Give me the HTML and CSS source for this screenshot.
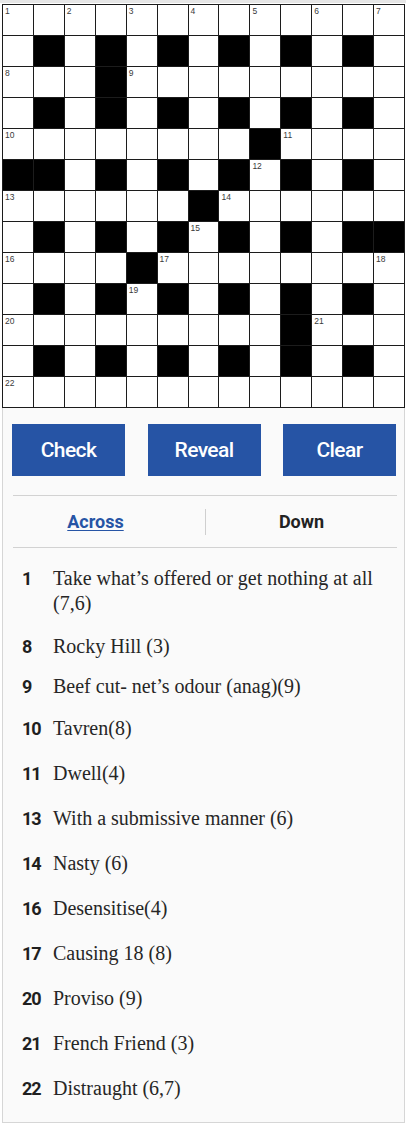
FILE: index.html
```html
<!DOCTYPE html>
<html lang="en">
<head>
<meta charset="utf-8">
<title>Crossword</title>
<link rel="stylesheet" href="styles.css">
</head>
<body>
<div class="topbar"></div>
<div class="grid">
  <!-- row 0 -->
  <div class="cell"><span class="num">1</span></div><div class="cell"></div><div class="cell"><span class="num">2</span></div><div class="cell"></div><div class="cell"><span class="num">3</span></div><div class="cell"></div><div class="cell"><span class="num">4</span></div><div class="cell"></div><div class="cell"><span class="num">5</span></div><div class="cell"></div><div class="cell"><span class="num">6</span></div><div class="cell"></div><div class="cell"><span class="num">7</span></div>
  <!-- row 1 -->
  <div class="cell"></div><div class="cell block"></div><div class="cell"></div><div class="cell block"></div><div class="cell"></div><div class="cell block"></div><div class="cell"></div><div class="cell block"></div><div class="cell"></div><div class="cell block"></div><div class="cell"></div><div class="cell block"></div><div class="cell"></div>
  <!-- row 2 -->
  <div class="cell"><span class="num">8</span></div><div class="cell"></div><div class="cell"></div><div class="cell block"></div><div class="cell"><span class="num">9</span></div><div class="cell"></div><div class="cell"></div><div class="cell"></div><div class="cell"></div><div class="cell"></div><div class="cell"></div><div class="cell"></div><div class="cell"></div>
  <!-- row 3 -->
  <div class="cell"></div><div class="cell block"></div><div class="cell"></div><div class="cell block"></div><div class="cell"></div><div class="cell block"></div><div class="cell"></div><div class="cell block"></div><div class="cell"></div><div class="cell block"></div><div class="cell"></div><div class="cell block"></div><div class="cell"></div>
  <!-- row 4 -->
  <div class="cell"><span class="num">10</span></div><div class="cell"></div><div class="cell"></div><div class="cell"></div><div class="cell"></div><div class="cell"></div><div class="cell"></div><div class="cell"></div><div class="cell block"></div><div class="cell"><span class="num">11</span></div><div class="cell"></div><div class="cell"></div><div class="cell"></div>
  <!-- row 5 -->
  <div class="cell block"></div><div class="cell block"></div><div class="cell"></div><div class="cell block"></div><div class="cell"></div><div class="cell block"></div><div class="cell"></div><div class="cell block"></div><div class="cell"><span class="num">12</span></div><div class="cell block"></div><div class="cell"></div><div class="cell block"></div><div class="cell"></div>
  <!-- row 6 -->
  <div class="cell"><span class="num">13</span></div><div class="cell"></div><div class="cell"></div><div class="cell"></div><div class="cell"></div><div class="cell"></div><div class="cell block"></div><div class="cell"><span class="num">14</span></div><div class="cell"></div><div class="cell"></div><div class="cell"></div><div class="cell"></div><div class="cell"></div>
  <!-- row 7 -->
  <div class="cell"></div><div class="cell block"></div><div class="cell"></div><div class="cell block"></div><div class="cell"></div><div class="cell block"></div><div class="cell"><span class="num">15</span></div><div class="cell block"></div><div class="cell"></div><div class="cell block"></div><div class="cell"></div><div class="cell block"></div><div class="cell block"></div>
  <!-- row 8 -->
  <div class="cell"><span class="num">16</span></div><div class="cell"></div><div class="cell"></div><div class="cell"></div><div class="cell block"></div><div class="cell"><span class="num">17</span></div><div class="cell"></div><div class="cell"></div><div class="cell"></div><div class="cell"></div><div class="cell"></div><div class="cell"></div><div class="cell"><span class="num">18</span></div>
  <!-- row 9 -->
  <div class="cell"></div><div class="cell block"></div><div class="cell"></div><div class="cell block"></div><div class="cell"><span class="num">19</span></div><div class="cell block"></div><div class="cell"></div><div class="cell block"></div><div class="cell"></div><div class="cell block"></div><div class="cell"></div><div class="cell block"></div><div class="cell"></div>
  <!-- row 10 -->
  <div class="cell"><span class="num">20</span></div><div class="cell"></div><div class="cell"></div><div class="cell"></div><div class="cell"></div><div class="cell"></div><div class="cell"></div><div class="cell"></div><div class="cell"></div><div class="cell block"></div><div class="cell"><span class="num">21</span></div><div class="cell"></div><div class="cell"></div>
  <!-- row 11 -->
  <div class="cell"></div><div class="cell block"></div><div class="cell"></div><div class="cell block"></div><div class="cell"></div><div class="cell block"></div><div class="cell"></div><div class="cell block"></div><div class="cell"></div><div class="cell block"></div><div class="cell"></div><div class="cell block"></div><div class="cell"></div>
  <!-- row 12 -->
  <div class="cell"><span class="num">22</span></div><div class="cell"></div><div class="cell"></div><div class="cell"></div><div class="cell"></div><div class="cell"></div><div class="cell"></div><div class="cell"></div><div class="cell"></div><div class="cell"></div><div class="cell"></div><div class="cell"></div><div class="cell"></div>
</div>

<div class="panel">
  <div class="actions">
    <button class="btn">Check</button>
    <button class="btn">Reveal</button>
    <button class="btn">Clear</button>
  </div>
  <div class="tabs">
    <div class="tab tab--active"><a class="tab__link">Across</a></div>
    <div class="tab tab--down"><span>Down</span></div>
  </div>
  <ol class="clues">
    <li class="clue"><span class="clue__num">1</span><span class="clue__text">Take what’s offered or get nothing at all (7,6)</span></li>
    <li class="clue clue--compact"><span class="clue__num">8</span><span class="clue__text">Rocky Hill (3)</span></li>
    <li class="clue clue--compact"><span class="clue__num">9</span><span class="clue__text">Beef cut- net’s odour (anag)(9)</span></li>
    <li class="clue"><span class="clue__num">10</span><span class="clue__text">Tavren(8)</span></li>
    <li class="clue"><span class="clue__num">11</span><span class="clue__text">Dwell(4)</span></li>
    <li class="clue"><span class="clue__num">13</span><span class="clue__text">With a submissive manner (6)</span></li>
    <li class="clue"><span class="clue__num">14</span><span class="clue__text">Nasty (6)</span></li>
    <li class="clue"><span class="clue__num">16</span><span class="clue__text">Desensitise(4)</span></li>
    <li class="clue"><span class="clue__num">17</span><span class="clue__text">Causing 18 (8)</span></li>
    <li class="clue"><span class="clue__num">20</span><span class="clue__text">Proviso (9)</span></li>
    <li class="clue"><span class="clue__num">21</span><span class="clue__text">French Friend (3)</span></li>
    <li class="clue"><span class="clue__num">22</span><span class="clue__text">Distraught (6,7)</span></li>
  </ol>
</div>
</body>
</html>
```

FILE: styles.css
```css
html, body {
  margin: 0;
  padding: 0;
  background: #ffffff;
}

body {
  width: 406px;
  font-family: "Liberation Serif", serif;
}

.topbar {
  height: 3px;
  background: #e6e6e6;
}

.grid {
  box-sizing: border-box;
  width: 403px;
  height: 404px;
  margin: 1px 0 0 2px;
  padding: 1px;
  display: grid;
  grid-template-columns: repeat(13, 1fr);
  grid-template-rows: repeat(13, 1fr);
  gap: 1px;
  background: #1c1c1c;
}

.cell {
  background: #ffffff;
  padding: 2px 0 0 2px;
  line-height: 1;
  overflow: hidden;
}

.cell.block {
  background: #000000;
}

.num {
  display: block;
  font-family: "Liberation Sans", "DejaVu Sans", sans-serif;
  font-size: 8.5px;
  line-height: 9px;
  color: #3a3a3a;
}

.panel {
  box-sizing: border-box;
  width: 403px;
  margin-left: 2px;
  border: 1px solid #d6d6d6;
  border-top: none;
  background: #fafafa;
  padding-bottom: 11px;
}

.actions {
  display: flex;
  justify-content: space-between;
  padding: 16px 8px 0 9px;
}

.btn {
  width: 113px;
  height: 52px;
  border: none;
  margin: 0;
  padding: 0;
  background: #2654a5;
  color: #ffffff;
  font-family: Roboto, "Liberation Sans", sans-serif;
  font-weight: 500;
  font-size: 21px;
  letter-spacing: -0.6px;
}

.tabs {
  display: flex;
  align-items: center;
  height: 51px;
  margin: 19px 7px 0 10px;
  border-top: 1px solid #d2d2d2;
  border-bottom: 1px solid #d2d2d2;
  font-family: Roboto, "Liberation Sans", sans-serif;
  font-weight: 700;
  font-size: 18px;
}

.tab {
  height: 26px;
  line-height: 26px;
  text-align: center;
}

.tab--active {
  flex: 0 0 192px;
  box-sizing: border-box;
  padding-right: 27px;
}

.tab__link {
  color: #2654a5;
  text-decoration: underline;
  text-decoration-thickness: 1px;
  text-underline-offset: 2px;
}

.tab--down {
  flex: 1;
  border-left: 1px solid #cfcfcf;
  color: #222222;
}

.clues {
  list-style: none;
  margin: 0;
  padding: 8px 0 0 19px;
}

.clue {
  display: flex;
  align-items: flex-start;
  padding: 10px 0;
}

.clue--compact {
  padding: 8px 0 7px;
}

.clue__num {
  flex: 0 0 31px;
  height: 25px;
  line-height: 25px;
  font-family: Roboto, "Liberation Sans", sans-serif;
  font-weight: 700;
  font-size: 18px;
  color: #1f1f1f;
  letter-spacing: -1px;
}

.clue__text {
  line-height: 25px;
  font-family: "Liberation Serif", serif;
  font-size: 20px;
  color: #262626;
  padding-right: 10px;
}
```
